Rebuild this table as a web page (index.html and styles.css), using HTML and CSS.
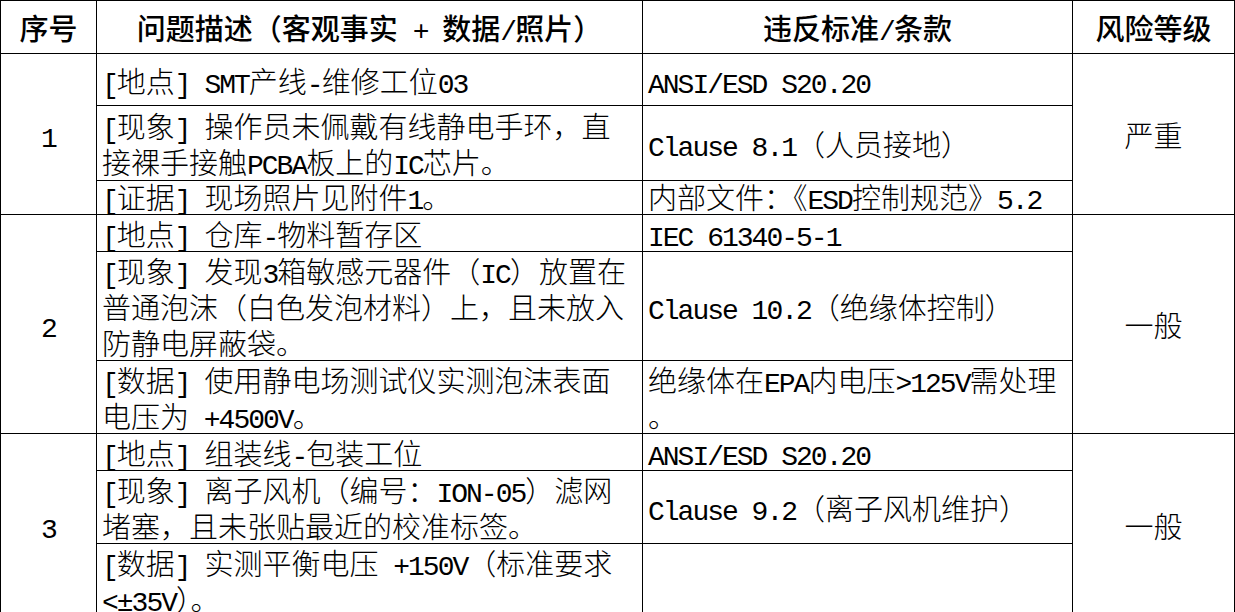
FILE: index.html
```html
<!DOCTYPE html>
<html lang="zh-CN">
<head>
<meta charset="utf-8">
<title>ESD 审核问题记录</title>
<link rel="stylesheet" href="styles.css">
</head>
<body>
<table class="sheet">
  <colgroup>
    <col class="c-no">
    <col class="c-desc">
    <col class="c-std">
    <col class="c-risk">
  </colgroup>
  <thead>
    <tr class="h-head">
      <th>序号</th>
      <th>问题描述（客观事实<span class="en"> + </span>数据<span class="en">/</span>照片）</th>
      <th>违反标准<span class="en">/</span>条款</th>
      <th>风险等级</th>
    </tr>
  </thead>
  <tbody>
    <tr class="h-52">
      <td class="no" rowspan="3"><span class="en">1</span></td>
      <td><span class="en">[</span>地点<span class="en">] SMT</span>产线<span class="en">-</span>维修工位<span class="en">03</span></td>
      <td><span class="en">ANSI/ESD S20.20</span></td>
      <td class="risk" rowspan="3">严重</td>
    </tr>
    <tr class="h-75">
      <td><span class="en">[</span>现象<span class="en">] </span>操作员未佩戴有线静电手环，直<br>接裸手接触<span class="en">PCBA</span>板上的<span class="en">IC</span>芯片。</td>
      <td><span class="en">Clause 8.1</span>（人员接地）</td>
    </tr>
    <tr class="h-33">
      <td><span class="en">[</span>证据<span class="en">] </span>现场照片见附件<span class="en">1</span>。</td>
      <td>内部文件：《<span class="en">ESD</span>控制规范》<span class="en">5.2</span></td>
    </tr>

    <tr class="h-37">
      <td class="no" rowspan="3"><span class="en">2</span></td>
      <td><span class="en">[</span>地点<span class="en">] </span>仓库<span class="en">-</span>物料暂存区</td>
      <td><span class="en">IEC 61340-5-1</span></td>
      <td class="risk" rowspan="3">一般</td>
    </tr>
    <tr class="h-108">
      <td><span class="en">[</span>现象<span class="en">] </span>发现<span class="en">3</span>箱敏感元器件（<span class="en">IC</span>）放置在<br>普通泡沫（白色发泡材料）上，且未放入<br>防静电屏蔽袋。</td>
      <td><span class="en">Clause 10.2</span>（绝缘体控制）</td>
    </tr>
    <tr class="h-72">
      <td><span class="en">[</span>数据<span class="en">] </span>使用静电场测试仪实测泡沫表面<br>电压为<span class="en"> +4500V</span>。</td>
      <td>绝缘体在<span class="en">EPA</span>内电压<span class="en">&gt;125V</span>需处理<br>。</td>
    </tr>

    <tr class="h-36">
      <td class="no" rowspan="3"><span class="en">3</span></td>
      <td><span class="en">[</span>地点<span class="en">] </span>组装线<span class="en">-</span>包装工位</td>
      <td><span class="en">ANSI/ESD S20.20</span></td>
      <td class="risk" rowspan="3">一般</td>
    </tr>
    <tr class="h-72">
      <td><span class="en">[</span>现象<span class="en">] </span>离子风机（编号：<span class="en">ION-05</span>）滤网<br>堵塞，且未张贴最近的校准标签。</td>
      <td><span class="en">Clause 9.2</span>（离子风机维护）</td>
    </tr>
    <tr class="h-72">
      <td><span class="en">[</span>数据<span class="en">] </span>实测平衡电压<span class="en"> +150V</span>（标准要求<br><span class="en">&lt;±35V</span>）。</td>
      <td></td>
    </tr>
  </tbody>
</table>
</body>
</html>
```

FILE: styles.css
```css
html, body {
  margin: 0;
  padding: 0;
  background: #ffffff;
}

.sheet {
  border-collapse: collapse;
  table-layout: fixed;
  width: 1234px;
  font-family: "Noto Sans CJK SC", sans-serif;
  font-size: 29px;
  line-height: 36px;
  color: #000000;
}

.c-no { width: 96px; }
.c-desc { width: 546px; }
.c-std { width: 430px; }
.c-risk { width: 162px; }

.sheet th,
.sheet td {
  border: 1px solid #000000;
  padding: 0 5px;
  vertical-align: middle;
  text-align: left;
  white-space: nowrap;
  overflow: hidden;
}

.sheet td {
  font-weight: 300;
}

.sheet th {
  text-align: center;
  font-weight: 500;
}

.sheet td.no,
.sheet td.risk {
  text-align: center;
}

.en {
  font-family: "Liberation Mono", monospace;
  font-size: 28px;
  letter-spacing: -2px;
  line-height: 24px;
}

.h-head { height: 53px; }
.h-52 { height: 52px; }
.h-75 { height: 75px; }
.h-33 { height: 33px; }
.h-33 td { line-height: 31px; }
.h-37 { height: 37px; }
.h-36 { height: 36px; }
.h-108 { height: 108px; }
.h-72 { height: 72px; }
```
